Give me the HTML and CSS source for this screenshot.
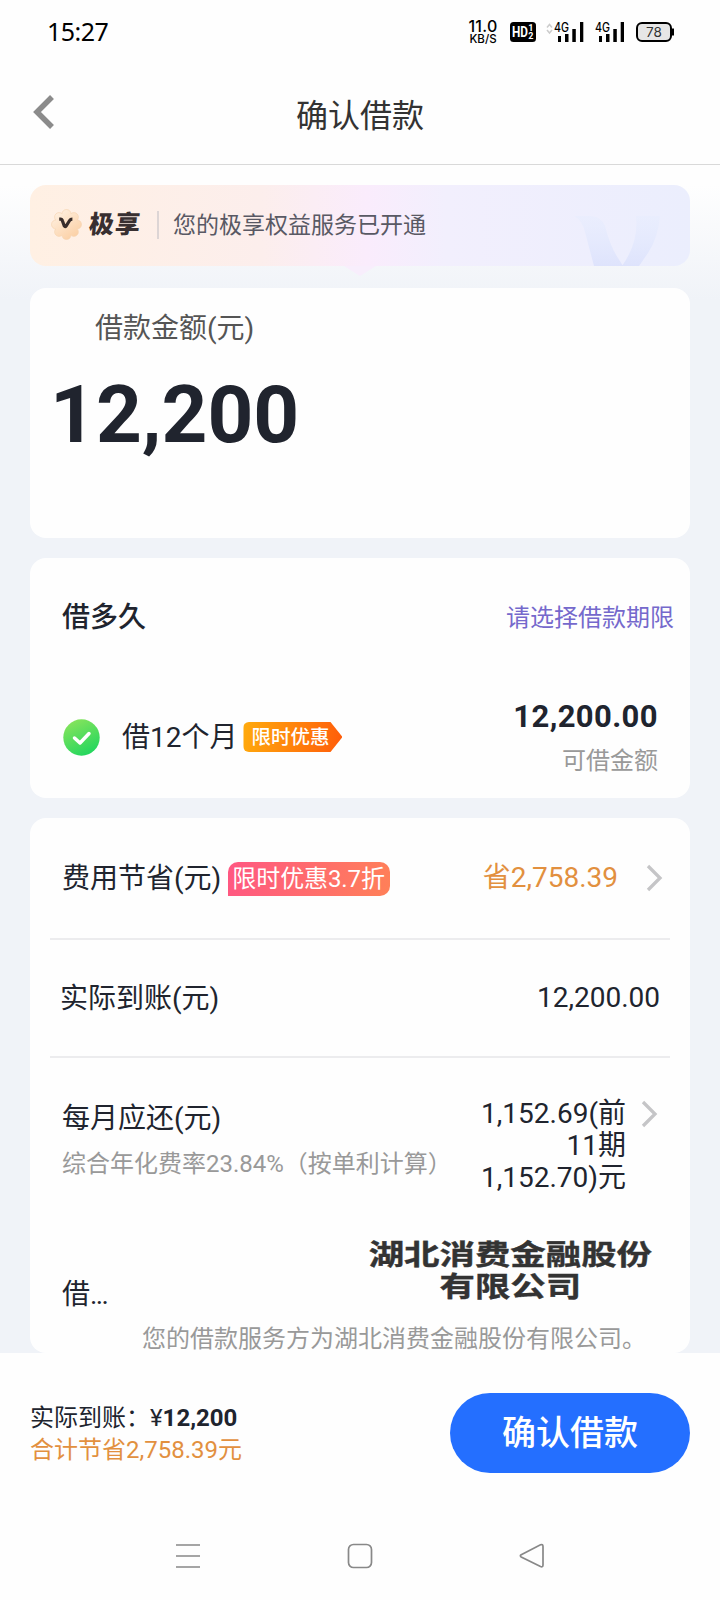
FILE: index.html
```html
<!DOCTYPE html>
<html lang="zh-CN">
<head>
<meta charset="utf-8">
<title>确认借款</title>
<link rel="stylesheet" href="styles.css">
</head>
<body>
<div class="screen">
  <div class="status">
    <span class="clock">15:27</span>
    <div class="status-icons">
      <div class="speed"><span class="speed-num">11.0</span><span class="speed-unit">KB/S</span></div>
      <svg class="hd" width="26" height="20" viewBox="0 0 26 20"><rect width="26" height="20" rx="3.5"/><text class="hd-main" x="2" y="15" textLength="16" lengthAdjust="spacingAndGlyphs">HD</text><text class="hd-sub" x="18.2" y="9.3">1</text><text class="hd-sub" x="18.2" y="17.3">2</text></svg>
      <svg class="sig1" width="38" height="22" viewBox="0 0 38 22"><path class="arrows" d="M1 6.5l2.5-3 2.5 3M1 9l2.5 3L6 9"/><text class="gen" x="8" y="10.5" textLength="15" lengthAdjust="spacingAndGlyphs">4G</text><path d="M12 15h3v6h-3zM19 13h3.500v8H19zM26.300 8h3.500v13h-3.500zM34 1h3.300v20H34z"/></svg>
      <svg class="sig2" width="29" height="22" viewBox="0 0 29 22"><text class="gen" x="0" y="10.500" textLength="15" lengthAdjust="spacingAndGlyphs">4G</text><path d="M4 15h3v6H4zM11 13h3.500v8H11zM18.300 8h3.500v13h-3.500zM25.700 1H29v20h-3.300z"/></svg>
      <svg class="batt" width="38" height="20" viewBox="0 0 38 20"><rect class="batt-body" x="1" y="1" width="34" height="18" rx="5"/><rect x="36" y="6.500" width="2" height="7"/><text class="batt-num" x="18" y="14.500" text-anchor="middle">78</text></svg>
    </div>
  </div>
  <header class="header">
    <svg class="back" width="22" height="36" viewBox="0 0 22 36"><path d="M19 3L4 18l15 15"/></svg>
    <h1 class="title">确认借款</h1>
  </header>
  <main class="content">
    <section class="banner">
      <svg class="badge" width="31" height="31" viewBox="0 0 31 31">
        <defs><linearGradient id="petal" gradientUnits="userSpaceOnUse" x1="4" y1="2" x2="24" y2="30"><stop offset="0" stop-color="#fff1e2"/><stop offset="1" stop-color="#fbcfa3"/></linearGradient></defs>
        <g class="petals"><circle cx="15.500" cy="5" r="4.500"/><circle cx="22.900" cy="8.100" r="4.500"/><circle cx="26" cy="15.500" r="4.500"/><circle cx="22.900" cy="22.900" r="4.500"/><circle cx="15.500" cy="26" r="4.500"/><circle cx="8.100" cy="22.900" r="4.500"/><circle cx="5" cy="15.500" r="4.500"/><circle cx="8.100" cy="8.100" r="4.500"/></g>
        <circle class="core" cx="15.500" cy="15.500" r="11.500"/>
        <path class="vee" d="M8.200 10.200h1.300q1.500 0 2 1.800l1.800 5q.8 1.300 1.800 0l3.500-5.500q.8-1.300 2.800-1.300"/>
      </svg>
      <span class="brand">极享</span>
      <span class="bar"></span>
      <span class="banner-text">您的极享权益服务已开通</span>
      <svg class="mark" width="92" height="54" viewBox="0 0 92 54"><defs><linearGradient id="fade" x1="0" y1="0" x2="0" y2="1"><stop offset="0" stop-color="#e5ecfe" stop-opacity=".4"/><stop offset="1" stop-color="#dee3fc"/></linearGradient></defs><path d="M0 4H16Q27 4 31 14Q36 34 44 46L49 54H20L11 20Q8 8 0 4ZM62 4H86Q84 26 74 41L65 54H48Q65 30 62 4Z"/></svg>
      <span class="notch"></span>
    </section>

    <section class="card amount">
      <div class="amount-label">借款金额(元)</div>
      <div class="amount-value">12,200</div>
    </section>

    <section class="card term">
      <div class="term-head"><h2 class="term-title">借多久</h2><span class="term-link">请选择借款期限</span></div>
      <div class="term-row">
        <svg class="check" width="37" height="37" viewBox="0 0 37 37"><defs><linearGradient id="green" x1=".2" y1="0" x2=".7" y2="1"><stop offset="0" stop-color="#8ae45c"/><stop offset="1" stop-color="#20d65e"/></linearGradient></defs><circle cx="18.500" cy="18.500" r="18.200"/><path d="M11.500 19l5.500 5L26 14.500"/></svg>
        <span class="term-name">借12个月</span>
        <span class="promo">限时优惠</span>
        <div class="quota"><span class="quota-value">12,200.00</span><span class="quota-label">可借金额</span></div>
      </div>
    </section>

    <section class="card fees">
      <div class="row save">
        <span class="save-label">费用节省(元)</span><span class="discount">限时优惠3.7折</span>
        <span class="save-value">省2,758.39</span>
        <svg class="chev" width="18" height="28" viewBox="0 0 18 28"><path d="M3 2l12 12L3 26"/></svg>
      </div>
      <div class="row receive"><span class="receive-label">实际到账(元)</span><span class="receive-value">12,200.00</span></div>
      <div class="monthly">
        <div class="monthly-left"><span class="monthly-label">每月应还(元)</span><span class="rate">综合年化费率23.84%（按单利计算）</span></div>
        <div class="monthly-value">1,152.69(前<br>11期<br>1,152.70)元</div>
        <svg class="chev" width="18" height="28" viewBox="0 0 18 28"><path d="M3 2l12 12L3 26"/></svg>
      </div>
      <div class="lender"><span class="lender-label">借<span class="dots">...</span></span><div class="lender-name">湖北消费金融股份<br>有限公司</div></div>
      <p class="service">您的借款服务方为湖北消费金融股份有限公司。</p>
    </section>
  </main>
  <footer class="footer">
    <div class="summary"><div class="sum-main">实际到账：¥<b>12,200</b></div><div class="sum-save">合计节省2,758.39元</div></div>
    <button class="submit">确认借款</button>
  </footer>
  <nav class="nav">
    <svg width="26" height="26" viewBox="0 0 26 26"><path d="M1 2h24M1 13h24M1 24h24"/></svg>
    <svg width="26" height="26" viewBox="0 0 26 26"><rect x="1.500" y="1.500" width="23" height="23" rx="5"/></svg>
    <svg width="26" height="26" viewBox="0 0 26 26"><path d="M2.200 11.700L21.500 1.700Q24 1 24 3.500V22Q24 24.500 21.500 23.500L2.200 14Q.5 12.800 2.200 11.700Z"/></svg>
  </nav>
</div>
</body>
</html>
```
FILE: styles.css
```css
* { box-sizing: border-box; }
body { margin: 0; background: #fefefe; font-family: Roboto, "Noto Sans CJK SC", sans-serif; color: #20242e; }
h1, h2, p { margin: 0; }
svg { display: block; flex: none; }
.screen { width: 720px; height: 1600px; display: flex; flex-direction: column; overflow: hidden; white-space: nowrap; }

.status { height: 64px; display: flex; justify-content: space-between; padding: 0 46px 0 47px; color: #000; }
.clock { font: 25px/62px "Noto Sans", sans-serif; letter-spacing: -.5px; }
.status-icons { display: flex; align-items: flex-start; padding-top: 21px; }
.speed { width: 30px; margin: -2px 12px 0 0; display: flex; flex-direction: column; align-items: center; font-family: Inter, sans-serif; font-weight: 500; }
.speed-num { font-size: 16px; line-height: 14px; letter-spacing: .3px; }
.speed-unit { font-size: 11.500px; line-height: 12px; }
.hd { margin: 1px 10px 0 0; }
.hd-main { font: bold 14px Roboto, sans-serif; fill: #fff; }
.hd-sub { font: bold 9px Roboto, sans-serif; fill: #fff; }
.sig1 { margin-right: 11px; }
.sig2 { margin-right: 12px; }
.gen { font: 500 12.500px Inter, sans-serif; }
.arrows { fill: none; stroke: #ccc; stroke-width: 1.500; }
.batt { margin-top: 1px; }
.batt-body { fill: #e6e6e6; stroke: #000; stroke-width: 2; }
.batt-num { font: 13.500px Inter, sans-serif; fill: #333; }

.header { height: 101px; border-bottom: 1px solid #d9d9d9; display: grid; grid-template-columns: 1fr auto 1fr; align-items: start; }
.back { margin: 30px 0 0 33px; fill: none; stroke: #8b8b8b; }
.back path { stroke-width: 5.500; }
.title { margin-top: 28px; font-size: 32px; line-height: 48px; font-weight: 400; color: #333; }

.content { height: 1188px; flex: none; padding: 20px 30px 0; background: linear-gradient(#fefefe 0, #fefefe 20px, #f0f3f8 135px); overflow: hidden; }
.banner { position: relative; height: 81px; border-radius: 16px; background: linear-gradient(90deg, #fff0e3 0, #fceeec 35%, #faecfc 51%, #f2effd 63%, #ebeefd 100%); display: flex; align-items: center; padding: 0 0 1px 21px; }
.petals { fill: url(#petal); stroke: #f7d6b3; stroke-width: .7; }
.core { fill: url(#petal); }
.badge { margin-top: -2px; }
.vee { fill: none; stroke: #382d2b; stroke-width: 3.200; }
.brand { margin-left: 7px; font-size: 25px; font-weight: 900; color: #382f30; transform: skewX(-6deg); line-height: 40px; letter-spacing: 1px; }
.bar { width: 2px; height: 28px; background: #ddd5d5; margin: 0 14px 0 16px; }
.banner-text { font-size: 23px; line-height: 40px; padding-top: 2px; color: #595964; }
.mark { position: absolute; right: 24px; bottom: 0; fill: url(#fade); }
.notch { position: absolute; left: 314px; top: 81px; border: solid transparent; border-width: 10px 16px 0; border-top-color: #f8eefc; }

.card { background: #fefefe; border-radius: 16px; }
.amount { height: 250px; margin-top: 22px; padding: 21px 20px; }
.amount-label { padding-left: 45px; font-size: 28px; line-height: 40px; color: #555; }
.amount-value { margin-top: 16px; font-size: 80px; line-height: 100px; font-weight: 700; }

.term { height: 240px; margin-top: 20px; padding: 39px 16px 0 32px; }
.term-head { display: flex; justify-content: space-between; align-items: center; height: 42px; }
.term-title { font-size: 28px; line-height: 42px; font-weight: 500; }
.term-link { font-size: 24px; line-height: 36px; margin-top: -1px; color: #7569cc; }
.term-row { display: flex; align-items: center; margin-top: 56px; height: 84px; padding-right: 16px; }
.check { fill: url(#green); margin-left: 1px; }
.check path { fill: none; stroke: #fff; stroke-width: 3.500; stroke-linecap: round; stroke-linejoin: round; }
.term-name { margin-left: 22px; font-size: 28px; line-height: 40px; padding-top: 1px; }
.promo { margin-left: 6px; width: 99px; height: 30px; padding-left: 8px; font-size: 19.500px; line-height: 31px; font-weight: 500; color: #fff; border-radius: 6px 0 0 6px; background: linear-gradient(100deg, #ffab0d, #ff5c0a); clip-path: polygon(0 0, 87px 0, 99px 15px, 87px 30px, 0 30px); }
.quota { margin-left: auto; display: flex; flex-direction: column; align-items: flex-end; padding-top: 3px; }
.quota-value { font-size: 31px; line-height: 44px; font-weight: 700; letter-spacing: .4px; }
.quota-label { font-size: 24px; line-height: 44px; color: #999; }

.fees { height: 535px; margin-top: 20px; padding: 0 20px; }
.row { display: flex; align-items: center; border-bottom: 2px solid #ececee; font-size: 28px; line-height: 40px; }
.save { height: 122px; padding: 0 7px 0 12px; }
.save-label, .receive-label { padding-top: 2px; }
.receive { height: 118px; padding: 0 10px; justify-content: space-between; }
.discount { margin-left: 7px; margin-top: 1px; height: 34px; padding: 0 5px 0 4px; font-size: 24px; letter-spacing: -.1px; line-height: 34px; color: #fff; border-radius: 10px 10px 10px 0; background: linear-gradient(100deg, #ff5782, #ff8058); }
.save-value { margin-left: auto; margin-right: 27px; color: #e2903f; }
.chev { fill: none; stroke: #c5c5c7; stroke-width: 3.300; }
.monthly { display: flex; height: 149px; padding: 40px 12px 0 12px; }
.monthly-left { display: flex; flex-direction: column; padding-top: 1px; }
.monthly-label { font-size: 28px; line-height: 40px; }
.rate { margin-top: 2px; font-size: 24px; line-height: 46px; color: #999; }
.monthly-value { margin-left: auto; margin-right: 14px; font-size: 28px; line-height: 32px; text-align: right; }
.monthly .chev { margin-top: 2px; }
.lender { display: flex; justify-content: space-between; height: 115px; padding: 33px 18px 0 12px; }
.lender-label { font-size: 28px; line-height: 40px; margin-top: 35px; }
.dots { letter-spacing: -1.600px; }
.lender-name { font-size: 28px; line-height: 32px; font-weight: 700; -webkit-text-stroke: .4px #333; color: #333; text-align: center; transform: scaleX(1.265); transform-origin: right; }
.service { padding-left: 92px; font-size: 24px; line-height: 34px; color: #999; }

.footer { height: 160px; display: flex; justify-content: space-between; padding: 40px 30px; }
.summary { padding-top: 9px; font-size: 24px; line-height: 32px; }
.sum-save { color: #e2903f; }
.submit { width: 240px; height: 80px; border: 0; border-radius: 40px; background: #246fff; color: #fff; font: 500 34px/80px Roboto, "Noto Sans CJK SC", sans-serif; padding: 0; }
.nav { height: 87px; display: flex; justify-content: space-between; padding: 30px 175px 0; }
.nav svg { fill: none; stroke: #888; stroke-width: 1.700; }
```
